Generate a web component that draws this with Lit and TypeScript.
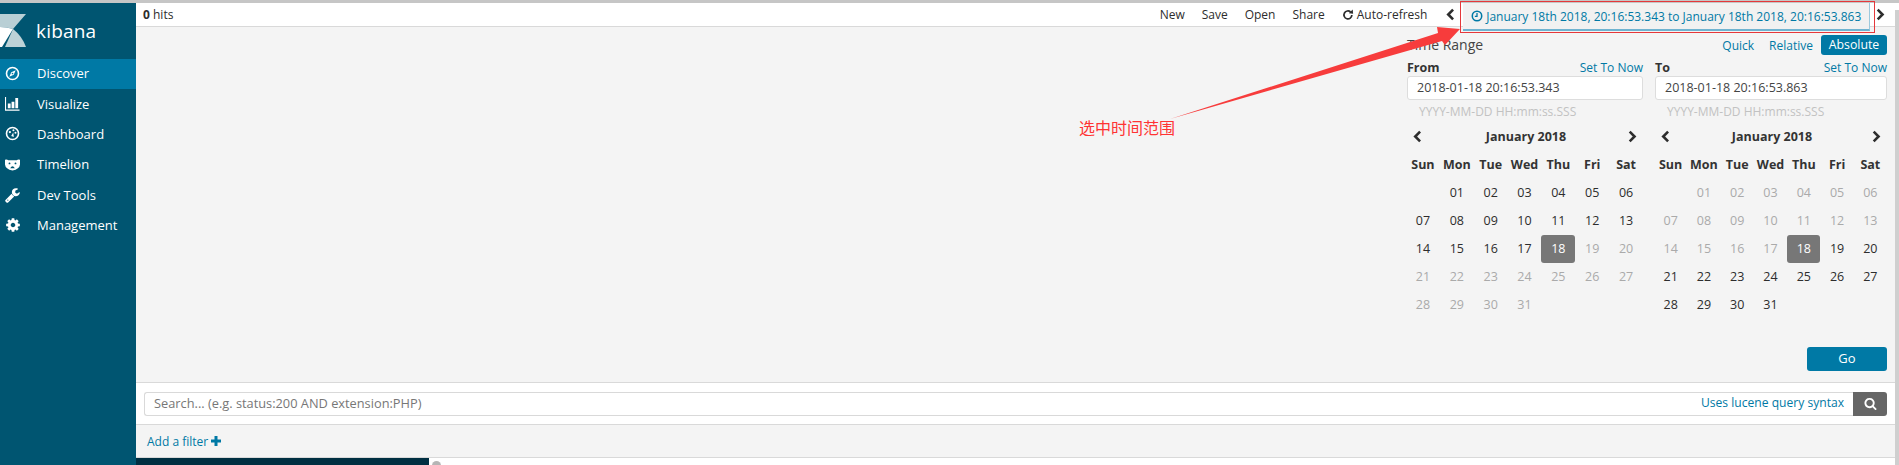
import { LitElement, html, css, svg } from "lit";
import { customElement } from "lit/decorators.js";

const WD = ["Sun", "Mon", "Tue", "Wed", "Thu", "Fri", "Sat"];
const ICONS: Record<string, any> = {
  compass: svg`<svg viewBox="0 0 16 16" width="15" height="15"><circle cx="8" cy="8" r="6.4" fill="none" stroke="#fff" stroke-width="1.7"/><path d="M11.4 4.6 9.3 9.3 4.6 11.4 6.7 6.7Z" fill="#fff"/><circle cx="8" cy="8" r=".9" fill="#0079a5"/></svg>`,
  bars: svg`<svg viewBox="0 0 16 16" width="15" height="15"><path d="M.5 1v14h15" fill="none" stroke="#fff" stroke-width="1.3"/><path d="M3 8h3v5H3zM7 6h3v7H7zM11 2h3v11h-3z" fill="#fff"/></svg>`,
  dash: svg`<svg viewBox="0 0 16 16" width="15" height="15"><circle cx="8" cy="8" r="6.4" fill="none" stroke="#fff" stroke-width="1.7"/><circle cx="5.2" cy="6.4" r="1.2" fill="#fff"/><circle cx="9" cy="4.6" r="1.1" fill="#fff"/><circle cx="11.2" cy="7.2" r="1.1" fill="#fff"/><path d="M8.8 7 9.4 11.6 6.6 10.6Z" fill="#fff"/></svg>`,
  bear: svg`<svg viewBox="0 0 16 16" width="15" height="15"><path d="M0 3Q2 2 3.500 3.500H12.500Q14 2 16 3V8Q15.500 13 8 14.500 .5 13 0 8Z" fill="#fff"/><circle cx="4.800" cy="6.800" r="1" fill="#005571"/><circle cx="11.200" cy="6.800" r="1" fill="#005571"/><path d="M5.500 12Q8 7.500 10.500 12Z" fill="#005571"/></svg>`,
  wrench: svg`<svg viewBox="0 0 1792 1792" width="16" height="16"><path fill="#fff" d="M384 1472q0-26-19-45t-45-19-45 19-19 45 19 45 45 19 45-19 19-45zm644-420l-682 682q-37 37-90 37-52 0-91-37l-106-108q-38-36-38-90 0-53 38-91l681-681q39 98 114.5 173.5t173.5 114.5zm634-435q0 39-23 106-47 134-164.5 217.5t-258.5 83.5q-185 0-316.5-131.5t-131.5-316.5 131.5-316.5 316.5-131.5q58 0 121.5 16.5t107.5 46.5q16 11 16 28t-16 28l-293 169v224l193 107q5-3 79-48.5t135.5-81 70.5-35.5q15 0 23.5 10t8.5 25z"/></svg>`,
  cog: svg`<svg viewBox="0 0 1792 1792" width="16" height="16"><path fill="#fff" d="M1152 896q0-106-75-181t-181-75-181 75-75 181 75 181 181 75 181-75 75-181zm512-109v222q0 12-8 23t-20 13l-185 28q-19 54-39 91 35 50 107 138 10 12 10 25t-9 23q-27 37-99 108t-94 71q-12 0-26-9l-138-108q-44 23-91 38-16 136-29 186-7 28-36 28h-222q-14 0-24.500-8.500t-11.500-21.500l-28-184q-49-16-90-37l-141 107q-10 9-25 9-14 0-25-11-126-114-165-168-7-10-7-23 0-12 8-23 15-21 51-66.500t54-70.500q-27-50-41-99l-183-27q-13-2-21-12.500t-8-23.500v-222q0-12 8-23t19-13l186-28q14-46 39-92-40-57-107-138-10-12-10-24 0-10 9-23 26-36 98.500-107.500t94.500-71.500q13 0 26 10l138 107q44-23 91-38 16-136 29-186 7-28 36-28h222q14 0 24.500 8.500t11.500 21.500l28 184q49 16 90 37l142-107q9-9 24-9 13 0 25 10 129 119 165 170 7 8 7 22 0 12-8 23-15 21-51 66.500t-54 70.500q26 50 41 98l183 28q13 2 21 12.500t8 23.500z"/></svg>`,
};
const NAV = [
  ["compass", "Discover"],
  ["bars", "Visualize"],
  ["dash", "Dashboard"],
  ["bear", "Timelion"],
  ["wrench", "Dev Tools"],
  ["cog", "Management"],
];
const chev = (dir: "l" | "r", size = 13) => svg`<svg viewBox="0 0 10 12" width=${size * 0.83} height=${size}><path d=${dir === "l" ? "M7.500 1.500 3 6l4.500 4.500" : "M2.500 1.500 7 6l-4.500 4.500"} fill="none" stroke="#2d2d2d" stroke-width="2.400"/></svg>`;

@customElement("app-root")
export class AppRoot extends LitElement {
  static styles = css`
    :host { display: block; width: 1899px; height: 465px; overflow: hidden; position: relative; background: #fff;
      font-family: "Open Sans", "Noto Sans", sans-serif; font-size: 12px; color: #2d2d2d; }
    .root { display: flex; height: 462px; border-top: 3px solid #c6c6c6; }
    .side { width: 136px; flex: none; background: #005571; color: #fff; }
    .logo { height: 56px; display: flex; align-items: flex-start; gap: 9px; padding-top: 11px; box-sizing: border-box; }
    .logo svg { display: block; }
    .logo span { font-size: 19px; line-height: 35px; letter-spacing: .2px; }
    .nav { display: flex; align-items: center; height: 30.4px; font-size: 13px; box-sizing: border-box; padding-bottom: 2px; }
    .nav.on { background: #0079a5; }
    .nav i { width: 26px; margin-left: 5px; margin-right: 6px; display: flex; }
    .main { flex: 1; min-width: 0; display: flex; flex-direction: column; background: #f4f4f4; }
    .strip { width: 4px; flex: none; margin-top: 7px; background: #cfcfcf; }
    .top { height: 23px; flex: none; background: #fff; border-bottom: 1px solid #d9d9d9; display: flex; align-items: center; padding-left: 7px; position: relative; }
    .hits { flex: 1; font-size: 12px; }
    .hits b { font-weight: 700; }
    .menu { display: flex; gap: 17px; font-size: 12px; align-items: center; margin-right: 18px; }
    .auto { display: flex; align-items: center; gap: 3px; }
    .tbtn { align-self: flex-start; height: 28px; width: 407px; margin: 0 5px 0 7px; box-sizing: border-box; background: #f1f1f1; border-bottom: 2px solid #6fb3d0; border-right: 1px solid #9cc9dd;
      display: flex; align-items: center; justify-content: center; gap: 3px; color: #0079a5; font-size: 12px; white-space: nowrap; }
    .chev { display: flex; align-items: center; }
    .chevr { margin-right: 9px; }
    .content { flex: 1; display: flex; flex-direction: column; align-items: flex-end; padding: 8px 8px 0 0; min-height: 0; }
    .picker { width: 480px; }
    .phead { display: flex; align-items: center; height: 20px; }
    .ptitle { flex: 1; font-size: 14px; color: #444; padding-bottom: 2px; }
    .mode { display: flex; align-items: center; gap: 15px; color: #0079a5; font-size: 12px; }
    .abs { background: #0079a5; color: #fff; height: 20px; width: 66px; display: flex; align-items: center; justify-content: center; border-radius: 3px; margin-left: -7px; font-size: 12.300px; box-sizing: border-box; padding-bottom: 1px; }
    .cols { display: grid; grid-template-columns: 236px 232px; column-gap: 12px; margin-top: 5px; }
    .lab { display: flex; justify-content: space-between; height: 16px; align-items: center; font-weight: 700; font-size: 12.500px; color: #333; box-sizing: border-box; padding-bottom: 2px; }
    .lab a { font-weight: 400; color: #0079a5; font-size: 12px; }
    .inp { height: 24px; background: #fff; border: 1px solid #ddd; border-radius: 3px; box-sizing: border-box; padding: 0 0 2px 9px; display: flex; align-items: center; font-size: 12.500px; color: #444; }
    .hint { height: 23px; display: flex; align-items: center; padding-left: 12px; color: #c2c2c2; font-size: 12px; }
    .chead { height: 28px; display: flex; align-items: center; justify-content: space-between; padding: 0 5px; font-weight: 700; font-size: 12.500px; color: #333; box-sizing: border-box; padding-bottom: 2px; }
    .chead span { padding-left: 2px; }
    .grid { display: grid; grid-template-columns: repeat(7, 1fr); grid-auto-rows: 28px; margin-left: -1px; }
    .cell { display: flex; align-items: center; justify-content: center; font-size: 12.500px; color: #2d2d2d; box-sizing: border-box; padding-bottom: 2px; }
    .wd { font-weight: 700; color: #333; }
    .mut { color: #aaa; }
    .sel { background: #777; color: #fff; border-radius: 3px; }
    .go { width: 80px; height: 24px; margin-top: 28px; background: #0079a5; color: #fff; border-radius: 3px; display: flex; align-items: center; justify-content: center; font-size: 13px; box-sizing: border-box; padding-bottom: 2px; }
    .band { flex: none; background: #fff; border-top: 1px solid #d9d9d9; height: 41px; display: flex; padding: 0 8px; align-items: center; }
    .q { flex: 1; height: 24px; box-sizing: border-box; display: flex; align-items: center; justify-content: space-between; padding: 0 9px 2px 9px; border: 1px solid #d9d9d9; border-width: 1px 0 1px 1px; border-radius: 3px 0 0 3px; color: #777; }
    .q span { font-size: 12.800px; }
    .q a { color: #0079a5; font-size: 12.100px; }
    .sb { width: 34px; height: 24px; background: #666; border-radius: 0 3px 3px 0; display: flex; align-items: center; justify-content: center; }
    .filter { flex: none; height: 32px; border-top: 1px solid #d9d9d9; display: flex; align-items: center; padding-left: 11px; gap: 3px; color: #0079a5; font-size: 12px; }
    .bottom { flex: none; height: 7px; border-top: 1px solid #d9d9d9; background: #fff; display: flex; }
    .dark { width: 293px; background: #002f42; }
    .bi { width: 9px; height: 9px; border-radius: 50%; background: #b5b5b5; margin: 3px 0 0 3px; }
    .over { position: absolute; left: 0; top: 0; pointer-events: none; }
    .rbox { position: absolute; left: 1460px; top: 1px; width: 415px; height: 32px; box-sizing: border-box; border: 1px solid #e5383b; }
    .note { position: absolute; left: 1079px; top: 116px; font: 16px/22px "Noto Sans CJK SC", sans-serif; color: #f33; white-space: nowrap; }
  `;

  cal(mutFn: (d: number) => boolean) {
    const days: any[] = [html`<div class="cell"></div>`];
    for (let d = 1; d <= 31; d++) {
      const c = d === 18 ? "sel" : mutFn(d) ? "mut" : "";
      days.push(html`<div class="cell ${c}">${String(d).padStart(2, "0")}</div>`);
    }
    return html`
      <div class="chead">${chev("l")}<span>January 2018</span>${chev("r")}</div>
      <div class="grid">${WD.map((w) => html`<div class="cell wd">${w}</div>`)}${days}</div>`;
  }

  render() {
    return html`
      <div class="root">
        <aside class="side">
          <div class="logo">
            <svg width="27" height="34" viewBox="0 0 27 34">
              <path d="M0 0H26L13 15Q7 13 0 13Z" fill="#b9cfd5"/>
              <path d="M13 15Q22 22 26 33H5Z" fill="#bdd2d7"/>
              <path d="M0 13Q7 13 13 15L2 33H0Z" fill="#fff"/>
            </svg>
            <span>kibana</span>
          </div>
          ${NAV.map(([ic, t], i) => html`<div class="nav ${i === 0 ? "on" : ""}"><i>${ICONS[ic]}</i>${t}</div>`)}
        </aside>
        <div class="main">
          <div class="top">
            <div class="hits"><b>0</b> hits</div>
            <div class="menu">
              <span>New</span><span>Save</span><span>Open</span><span>Share</span>
              <span class="auto">
                <svg viewBox="0 0 14 14" width="12" height="12"><path d="M11.500 7A4.600 4.600 0 1 1 10 3.500" fill="none" stroke="#2d2d2d" stroke-width="2"/><path d="M8 5 13 5.500 12.500 .5Z" fill="#2d2d2d"/></svg>
                Auto-refresh
              </span>
            </div>
            <span class="chev">${chev("l")}</span>
            <div class="tbtn">
              <svg viewBox="0 0 14 14" width="12" height="12"><circle cx="7" cy="7" r="5.500" fill="none" stroke="#0079a5" stroke-width="1.800"/><path d="M7 3.500V7.500H4.500" fill="none" stroke="#0079a5" stroke-width="1.500"/></svg>
              January 18th 2018, 20:16:53.343 to January 18th 2018, 20:16:53.863
            </div>
            <span class="chev chevr">${chev("r")}</span>
          </div>
          <div class="content">
            <div class="picker">
              <div class="phead">
                <div class="ptitle">Time Range</div>
                <div class="mode"><span>Quick</span><span>Relative</span><span class="abs">Absolute</span></div>
              </div>
              <div class="cols">
                <div>
                  <div class="lab"><span>From</span><a>Set To Now</a></div>
                  <div class="inp">2018-01-18 20:16:53.343</div>
                  <div class="hint">YYYY-MM-DD HH:mm:ss.SSS</div>
                  ${this.cal((d) => d > 18)}
                </div>
                <div>
                  <div class="lab"><span>To</span><a>Set To Now</a></div>
                  <div class="inp">2018-01-18 20:16:53.863</div>
                  <div class="hint">YYYY-MM-DD HH:mm:ss.SSS</div>
                  ${this.cal((d) => d < 18)}
                </div>
              </div>
            </div>
            <div class="go">Go</div>
          </div>
          <div class="band">
            <div class="q"><span>Search... (e.g. status:200 AND extension:PHP)</span><a>Uses lucene query syntax</a></div>
            <div class="sb"><svg viewBox="0 0 1792 1792" width="13" height="13"><path fill="#fff" d="M1216 832q0-185-131.500-316.500t-316.500-131.500-316.500 131.500-131.500 316.500 131.500 316.500 316.500 131.500 316.500-131.500 131.500-316.500zm512 832q0 52-38 90t-90 38q-54 0-90-38l-343-342q-179 124-399 124-143 0-273.500-55.500t-225-150-150-225-55.500-273.500 55.500-273.500 150-225 225-150 273.500-55.500 273.500 55.500 225 150 150 225 55.500 273.500q0 220-124 399l343 343q37 37 37 90z"/></svg></div>
          </div>
          <div class="filter">Add a filter
            <svg viewBox="0 0 10 10" width="10" height="10"><path d="M3.500 0h3v3.500H10v3H6.500V10h-3V6.500H0v-3h3.500z" fill="#0079a5"/></svg>
          </div>
          <div class="bottom"><div class="dark"></div><div class="bi"></div></div>
        </div>
        <div class="strip"></div>
      </div>
      <svg class="over" width="1899" height="465" viewBox="0 0 1899 465">
        <path d="M1170 119 1438 33 1437 27 1460 29 1445 45 1442 41Z" fill="#f73c3c"/>
      </svg>
      <div class="rbox"></div>
      <div class="note">选中时间范围</div>
    `;
  }
}
